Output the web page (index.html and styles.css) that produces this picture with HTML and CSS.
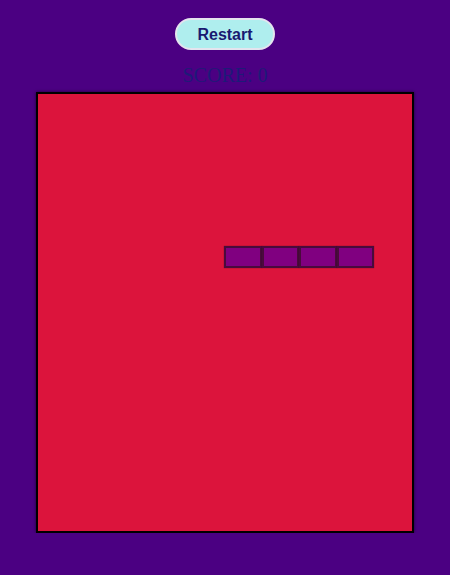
FILE: index.html
```html
<!DOCTYPE html>
<html lang="en">
<head>
    <meta charset="UTF-8">
    <meta name="viewport" content="width=device-width, initial-scale=1.0">
    <title>Snake</title>
    <link rel="stylesheet" href="styles.css">
</head>
<body>
    <div class="game">
        <button class="restart-btn">Restart</button>
        <div class="score">SCORE: 0</div>
        <div class="board">
            <div class="snake">
                <div class="segment"></div>
                <div class="segment"></div>
                <div class="segment"></div>
                <div class="segment"></div>
            </div>
        </div>
    </div>
</body>
</html>
```

FILE: styles.css
```css
* {
    box-sizing: border-box;
    margin: 0;
    padding: 0;
}

body {
    background-color: #4b0082;
    font-family: "Liberation Sans", Arial, sans-serif;
}

.game {
    display: flex;
    flex-direction: column;
    align-items: center;
    padding-top: 18px;
}

.restart-btn {
    background: #afeeee;
    color: #191970;
    border: 2px solid #e4e4ee;
    border-radius: 16px;
    padding: 6px 20px 4px;
    font-family: "Liberation Sans", Arial, sans-serif;
    font-size: 16px;
    font-weight: bold;
    line-height: 18px;
    cursor: pointer;
}

.score {
    margin-top: 14px;
    font-family: "Liberation Serif", "Times New Roman", serif;
    font-size: 20px;
    line-height: 23px;
    color: #1e1a78;
}

.board {
    position: relative;
    margin-top: 5px;
    width: 378px;
    height: 441px;
    background: #dc143c;
    border: 2px solid #000;
    box-shadow: 0 0 3px rgba(0, 0, 0, 0.6);
}

/* snake sits on the board grid */
.snake {
    position: absolute;
    left: 186px;
    top: 152px;
    display: flex;
}

.segment {
    width: 37.5px;
    height: 22px;
    background: #800080;
    border: 2px solid #4a0a3c;
    box-shadow: 0 0 1px rgba(0, 0, 0, 0.5);
}
```
